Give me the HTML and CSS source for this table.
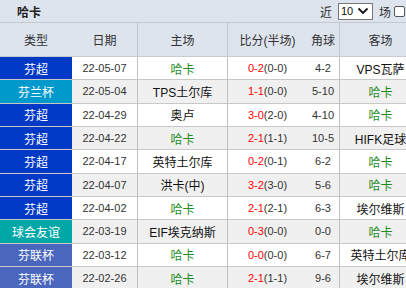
FILE: index.html
```html
<!DOCTYPE html>
<html>
<head>
<meta charset="utf-8">
<link rel="stylesheet" href="styles.css">
</head>
<body>
<div class="topbar">
  <span class="team">哈卡</span>
  <div class="ctrl">
    <span class="lbl">近</span>
    <div class="sel"><span>10</span><svg width="12" height="8" viewBox="0 0 12 8"><path d="M1.5 1.5 L6 6 L10.5 1.5" fill="none" stroke="#111" stroke-width="1.8"/></svg></div>
    <span class="lbl">场</span>
    <span class="chk"></span>
    <span class="chk2"></span>
  </div>
</div>
<div class="grid">
  <div class="h">类型</div><div class="h">日期</div><div class="h bl">主场</div><div class="h bl">比分(半场)</div><div class="h">角球</div><div class="h bl">客场</div>

  <div class="c t t1">芬超</div><div class="c d">22-05-07</div><div class="c cn bl g">哈卡</div><div class="c d bl"><span class="r">0-2</span>(0-0)</div><div class="c d">4-2</div><div class="c cn bl">VPS瓦萨</div>

  <div class="c t t2 e">芬兰杯</div><div class="c d e">22-05-04</div><div class="c cn bl e">TPS土尔库</div><div class="c d bl e"><span class="r">1-1</span>(0-0)</div><div class="c d e">5-10</div><div class="c cn bl g e">哈卡</div>

  <div class="c t t1">芬超</div><div class="c d">22-04-29</div><div class="c cn bl">奥卢</div><div class="c d bl"><span class="r">3-0</span>(2-0)</div><div class="c d">4-10</div><div class="c cn bl g">哈卡</div>

  <div class="c t t1 e">芬超</div><div class="c d e">22-04-22</div><div class="c cn bl g e">哈卡</div><div class="c d bl e"><span class="r">2-1</span>(1-1)</div><div class="c d e">10-5</div><div class="c cn bl e">HIFK足球</div>

  <div class="c t t1">芬超</div><div class="c d">22-04-17</div><div class="c cn bl">英特土尔库</div><div class="c d bl"><span class="r">0-2</span>(0-1)</div><div class="c d">6-2</div><div class="c cn bl g">哈卡</div>

  <div class="c t t1 e">芬超</div><div class="c d e">22-04-07</div><div class="c cn bl e">洪卡(中)</div><div class="c d bl e"><span class="r">3-2</span>(3-0)</div><div class="c d e">5-6</div><div class="c cn bl g e">哈卡</div>

  <div class="c t t1">芬超</div><div class="c d">22-04-02</div><div class="c cn bl g">哈卡</div><div class="c d bl"><span class="r">2-1</span>(2-1)</div><div class="c d">6-3</div><div class="c cn bl">埃尔维斯</div>

  <div class="c t t3 e">球会友谊</div><div class="c d e">22-03-19</div><div class="c cn bl e">EIF埃克纳斯</div><div class="c d bl e"><span class="r">0-3</span>(0-0)</div><div class="c d e">0-0</div><div class="c cn bl g e">哈卡</div>

  <div class="c t t4">芬联杯</div><div class="c d">22-03-12</div><div class="c cn bl g">哈卡</div><div class="c d bl"><span class="r">0-0</span>(0-0)</div><div class="c d">6-7</div><div class="c cn bl">英特土尔库</div>

  <div class="c t t4 e">芬联杯</div><div class="c d e">22-02-26</div><div class="c cn bl g e">哈卡</div><div class="c d bl e"><span class="r">2-1</span>(1-1)</div><div class="c d e">9-6</div><div class="c cn bl e">埃尔维斯</div>
</div>
</body>
</html>
```

FILE: styles.css
```css
html, body {
  margin: 0;
  padding: 0;
  background: #fff;
  overflow: hidden;
}
body {
  width: 406px;
  height: 288px;
  font-family: "Liberation Sans", "Noto Sans CJK SC", sans-serif;
  color: #222;
}
.topbar {
  height: 22px;
  border-bottom: 1px solid #c4c9d0;
  background: #dde4ee;
  display: flex;
  align-items: center;
  justify-content: space-between;
  padding-left: 17px;
  white-space: nowrap;
}
.team {
  font-size: 12px;
  font-weight: bold;
  color: #222;
}
.ctrl {
  display: flex;
  align-items: center;
  margin-right: -12px;
}
.lbl {
  font-size: 12px;
  color: #333;
}
.sel {
  box-sizing: border-box;
  width: 35px;
  height: 17px;
  margin: 0 6px 0 6px;
  border: 1px solid #767676;
  background: #fff;
  display: flex;
  align-items: center;
  justify-content: space-between;
  padding: 0 3px 0 2px;
  font-size: 11px;
  color: #111;
}
.chk {
  box-sizing: border-box;
  width: 11px;
  height: 11px;
  border: 1px solid #555;
  border-radius: 2px;
  background: #fff;
  margin-left: 3px;
}
.chk2 {
  box-sizing: border-box;
  width: 11px;
  height: 11px;
  border: 1px solid #555;
  border-radius: 2px;
  background: #fff;
  margin-left: 2px;
}
.grid {
  display: grid;
  grid-template-columns: 72px 65px 90px 80px 32px 82px;
  grid-template-rows: 34px repeat(10, 23.333px);
  width: 421px;
}
.h {
  background: #dde4ee;
  border-bottom: 1px solid #c8ccd2;
  display: flex;
  align-items: center;
  justify-content: center;
  font-size: 12px;
  color: #333;
}
.h.bl {
  border-left: 1px solid #c4c9d0;
}
.c {
  box-sizing: border-box;
  border-bottom: 1px solid #c8c8c8;
  display: flex;
  align-items: center;
  justify-content: center;
  background: #fff;
  white-space: nowrap;
  overflow: hidden;
}
.c.e {
  background: #f0f0f0;
}
.c.bl {
  border-left: 1px solid #c0c0c0;
}
.d {
  font-size: 11px;
  color: #333;
}
.cn {
  font-size: 12px;
  color: #111;
}
.g {
  color: #1f8c1f;
}
.r {
  color: #f00;
}
.t {
  font-size: 12px;
  color: #fff;
  border-bottom-color: #c8c8c8;
}
.c.t1 { background: #0039c6; }
.c.t2 { background: #0099cc; }
.c.t3 { background: #00a7a7; }
.c.t4 { background: #4a67bd; }
```
